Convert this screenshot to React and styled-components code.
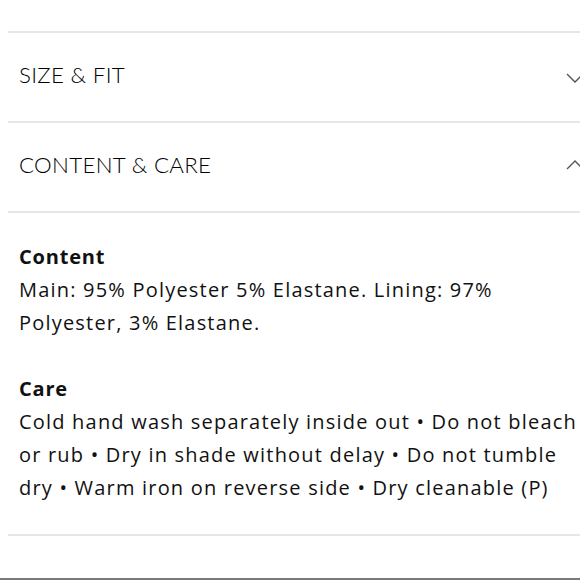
import React from 'react';
import styled, { createGlobalStyle } from 'styled-components';

const GlobalStyle = createGlobalStyle`
  html, body {
    margin: 0;
    padding: 0;
    background: #fff;
  }
  body {
    width: 580px;
    height: 580px;
    overflow: hidden;
    font-family: "Open Sans", "Noto Sans", sans-serif;
    color: #111;
  }
`;

const Page = styled.div`
  display: flex;
  flex-direction: column;
  height: 580px;
  padding-top: 31px;
  box-sizing: border-box;
  border-bottom: 2px solid #7a7a7a;
`;

const Accordion = styled.div`
  margin-left: 8px;
  border-top: 2px solid #e6e6e6;
`;

const Item = styled.div`
  border-bottom: 2px solid #e6e6e6;
`;

const Header = styled.div`
  display: flex;
  align-items: center;
  justify-content: space-between;
  height: 88px;
  padding-left: 11px;
  padding-bottom: 5px;
  box-sizing: border-box;
`;

const Title = styled.span`
  font-family: Lato, "Open Sans", sans-serif;
  font-size: 22.3px;
  font-weight: 300;
  letter-spacing: 0.3px;
  color: #000;
`;

const Chevron = styled.svg`
  width: 18px;
  height: 10px;
  margin-right: -4px;
  margin-top: ${p => (p.$up ? '0' : '6px')};
  flex-shrink: 0;
`;

const Body = styled.div`
  padding: 27px 0 30px 11px;
`;

const Block = styled.div`
  & + & {
    margin-top: 33px;
  }
`;

const Label = styled.div`
  font-size: 20px;
  font-weight: 700;
  line-height: 33px;
  letter-spacing: 0.8px;
`;

const Text = styled.p`
  margin: 0;
  font-size: 20px;
  line-height: 33px;
  letter-spacing: 1.2px;
`;

const ChevronIcon = ({ up }) => (
  <Chevron $up={up} viewBox="0 0 18 10">
    <path
      d={up ? 'M1 9 L9 1 L17 9' : 'M1 1 L9 9 L17 1'}
      fill="none"
      stroke="#555"
      strokeWidth="1.4"
    />
  </Chevron>
);

export default function App() {
  return (
    <>
      <GlobalStyle />
      <Page>
        <Accordion>
          <Item>
            <Header>
              <Title>SIZE &amp; FIT</Title>
              <ChevronIcon />
            </Header>
          </Item>
          <Item>
            <Header>
              <Title>CONTENT &amp; CARE</Title>
              <ChevronIcon up />
            </Header>
          </Item>
          <Item>
            <Body>
              <Block>
                <Label>Content</Label>
                <Text>Main: 95% Polyester 5% Elastane. Lining: 97% Polyester, 3% Elastane.</Text>
              </Block>
              <Block>
                <Label>Care</Label>
                <Text>
                  Cold hand wash separately inside out • Do not bleach or rub • Dry in shade without delay • Do not tumble dry • Warm iron on reverse side • Dry cleanable (P)
                </Text>
              </Block>
            </Body>
          </Item>
        </Accordion>
      </Page>
    </>
  );
}
